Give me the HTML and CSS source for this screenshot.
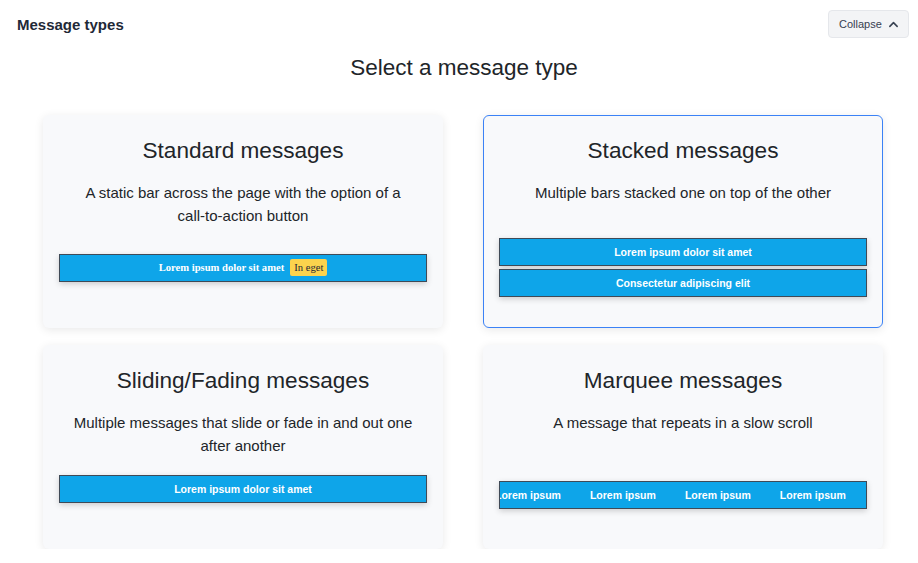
FILE: index.html
```html
<!DOCTYPE html>
<html lang="en">
<head>
<meta charset="utf-8">
<title>Message types</title>
<link rel="stylesheet" href="styles.css">
</head>
<body>
<div class="page">
  <header class="topbar">
    <h1 class="topbar-title">Message types</h1>
    <button class="collapse-btn" type="button">Collapse
      <svg class="chev" viewBox="0 0 12 12" width="11" height="11" aria-hidden="true"><path d="M2 8 L6 4 L10 8" fill="none" stroke="#374151" stroke-width="1.7" stroke-linecap="round" stroke-linejoin="round"/></svg>
    </button>
  </header>
  <h2 class="heading">Select a message type</h2>
  <div class="grid">
    <div class="card">
      <h3 class="card-title">Standard messages</h3>
      <p class="card-desc">A static bar across the page with the option of a call-to-action button</p>
      <div class="preview">
        <div class="bar bar-serif">Lorem ipsum dolor sit amet <span class="badge">In eget</span></div>
      </div>
    </div>
    <div class="card card-selected">
      <h3 class="card-title">Stacked messages</h3>
      <p class="card-desc">Multiple bars stacked one on top of the other</p>
      <div class="preview preview-stack">
        <div class="bar">Lorem ipsum dolor sit amet</div>
        <div class="bar">Consectetur adipiscing elit</div>
      </div>
    </div>
    <div class="card">
      <h3 class="card-title">Sliding/Fading messages</h3>
      <p class="card-desc">Multiple messages that slide or fade in and out one after another</p>
      <div class="preview preview-slide">
        <div class="bar">Lorem ipsum dolor sit amet</div>
      </div>
    </div>
    <div class="card">
      <h3 class="card-title">Marquee messages</h3>
      <p class="card-desc">A message that repeats in a slow scroll</p>
      <div class="preview preview-marquee">
        <div class="bar bar-marquee">
          <div class="marquee-track">
            <span>Lorem ipsum</span><span>Lorem ipsum</span><span>Lorem ipsum</span><span>Lorem ipsum</span>
          </div>
        </div>
      </div>
    </div>
  </div>
</div>
</body>
</html>
```

FILE: styles.css
```css
* { box-sizing: border-box; }
html, body { margin: 0; padding: 0; background: #ffffff; }
body {
  font-family: "Liberation Sans", Arial, sans-serif;
  color: #212529;
}
.page {
  padding: 10px 9px 0 17px;
}
.topbar {
  display: flex;
  align-items: center;
  justify-content: space-between;
  height: 28px;
}
.topbar-title {
  margin: 0;
  font-size: 15px;
  font-weight: 700;
  color: #1f2937;
}
.collapse-btn {
  display: flex;
  align-items: center;
  gap: 6px;
  height: 28px;
  width: 81px;
  padding: 0 0 0 10px;
  background: #f3f4f6;
  border: 1px solid #e5e7eb;
  border-radius: 4px;
  font-family: "Liberation Sans", Arial, sans-serif;
  font-size: 11px;
  color: #374151;
}
.chev { display: block; }
.heading {
  margin: 17px 0 34px;
  text-align: center;
  font-size: 22.5px;
  line-height: 26px;
  font-weight: 400;
  color: #212529;
  padding-left: 2px;
}
.grid {
  display: grid;
  grid-template-columns: minmax(0, 1fr) minmax(0, 1fr);
  grid-template-rows: 213px 204px;
  column-gap: 40px;
  row-gap: 17px;
  margin: 0 26px;
}
.card {
  display: flex;
  flex-direction: column;
  min-width: 0;
  background: #f8f9fb;
  border: 1px solid transparent;
  border-radius: 6px;
  box-shadow: 0 2px 10px rgba(0, 0, 0, 0.09);
  padding: 20px 15px 26px;
  text-align: center;
}
.card-selected {
  border-color: #3b82f6;
}
.card-title {
  margin: 0;
  font-size: 22.6px;
  line-height: 30px;
  font-weight: 400;
  color: #212529;
}
.card-desc {
  margin: 15px 12px 0;
  font-size: 15px;
  line-height: 23px;
  color: #212529;
}
.preview {
  margin-top: auto;
  height: 67px;
  display: flex;
  flex-direction: column;
  justify-content: center;
  gap: 3px;
}
.preview-slide {
  padding-bottom: 2px;
}
.preview-marquee {
  padding-top: 12px;
}
.bar {
  height: 28px;
  display: flex;
  align-items: center;
  justify-content: center;
  background: #0ea5e9;
  border: 1px solid #3f4a57;
  box-shadow: 0 2px 6px rgba(0, 0, 0, 0.18);
  color: #ffffff;
  font-family: "Liberation Sans", Arial, sans-serif;
  font-size: 10.5px;
  font-weight: 700;
}
.bar-serif {
  font-family: "Liberation Serif", "Times New Roman", serif;
  font-size: 10.6px;
  gap: 6px;
}
.badge {
  background: #fcd34d;
  color: #1f2937;
  font-weight: 400;
  font-size: 10.6px;
  padding: 2px 4px;
  border-radius: 2px;
  line-height: 13px;
}
.bar-marquee {
  justify-content: flex-start;
  overflow: hidden;
}
.marquee-track {
  display: flex;
  gap: 29px;
  margin-left: -5px;
  white-space: nowrap;
}
```
